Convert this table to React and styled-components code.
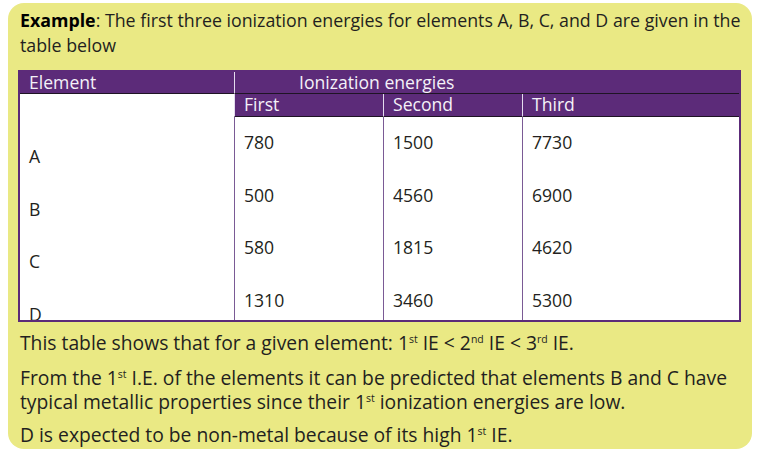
import React from "react";
import styled, { createGlobalStyle } from "styled-components";

const GlobalStyle = createGlobalStyle`
  html, body { margin: 0; padding: 0; background: #ffffff; }
  body { font-family: "Open Sans", "Noto Sans", sans-serif; color: #231f20; }
`;

const PURPLE = "#5c2b79";

const Card = styled.div`
  box-sizing: border-box;
  margin: 3px 0 0 8px;
  width: 744px;
  height: 446px;
  background: #eae984;
  border-radius: 16px;
  padding: 5px 8px 0 12px;
  overflow: hidden;
`;

const Title = styled.p`
  margin: 0;
  font-size: 17.8px;
  line-height: 25px;
  color: #231f20;
  b { font-weight: 700; color: #000; }
`;

const Table = styled.div`
  box-sizing: border-box;
  margin: 12px 0 0 -2px;
  width: 723px;
  height: 252px;
  border: 2px solid ${PURPLE};
  display: grid;
  grid-template-columns: 214px 149px 139px 217px;
  grid-template-rows: 22px 23px 1fr;
  background: #ffffff;
`;

const HeadCell = styled.div`
  box-sizing: border-box;
  background: ${PURPLE};
  color: #f4f1f8;
  font-size: 17.6px;
  line-height: 21px;
  padding-left: ${(p) => p.$pad || 9}px;
  border-bottom: 1px solid #1e1424;
  border-left: ${(p) => (p.$divider ? "1px solid #e4dcee" : "none")};
  grid-column: ${(p) => p.$col};
  grid-row: ${(p) => p.$row};
  white-space: nowrap;
`;

const BodyCell = styled.div`
  box-sizing: border-box;
  grid-column: ${(p) => p.$col};
  grid-row: ${(p) => p.$row};
  border-left: ${(p) => (p.$divider ? `1px solid #7a5a95` : "none")};
  padding: ${(p) => p.$top}px 0 0 9px;
  overflow: hidden;
  display: flex;
  flex-direction: column;
`;

const Value = styled.div`
  font-size: 17.6px;
  line-height: 21px;
  height: 52.7px;
  flex: none;
  color: #231f20;
`;

const Para = styled.p`
  margin: ${(p) => p.$mt}px 0 0 0;
  font-size: 19.3px;
  line-height: 24px;
  color: #231f20;
  sup {
    font-size: 10.5px;
    line-height: 0;
    vertical-align: 0;
    position: relative;
    top: -7px;
  }
`;

const elements = ["A", "B", "C", "D"];
const columns = [
  { name: "First", values: ["780", "500", "580", "1310"] },
  { name: "Second", values: ["1500", "4560", "1815", "3460"] },
  { name: "Third", values: ["7730", "6900", "4620", "5300"] },
];

export default function App() {
  return (
    <>
      <GlobalStyle />
      <Card>
        <Title>
          <b>Example</b>: The first three ionization energies for elements A, B, C, and D are given in the table below
        </Title>
        <Table>
          <HeadCell $col="1" $row="1">Element</HeadCell>
          <HeadCell $col="2 / 5" $row="1" $divider $pad={64}>Ionization energies</HeadCell>
          {columns.map((c, i) => (
            <HeadCell key={c.name} $col={`${i + 2}`} $row="2" $divider>
              {c.name}
            </HeadCell>
          ))}
          <BodyCell $col="1" $row="2 / 4" $top={52}>
            {elements.map((e) => (
              <Value key={e}>{e}</Value>
            ))}
          </BodyCell>
          {columns.map((c, i) => (
            <BodyCell key={c.name} $col={`${i + 2}`} $row="3" $divider $top={15}>
              {c.values.map((v, j) => (
                <Value key={j}>{v}</Value>
              ))}
            </BodyCell>
          ))}
        </Table>
        <Para $mt={9}>
          This table shows that for a given element: 1<sup>st</sup> IE &lt; 2<sup>nd</sup> IE &lt; 3<sup>rd</sup> IE.
        </Para>
        <Para $mt={11}>
          From the 1<sup>st</sup> I.E. of the elements it can be predicted that elements B and C have typical metallic properties since their 1<sup>st</sup> ionization energies are low.
        </Para>
        <Para $mt={9}>
          D is expected to be non-metal because of its high 1<sup>st</sup> IE.
        </Para>
      </Card>
    </>
  );
}
